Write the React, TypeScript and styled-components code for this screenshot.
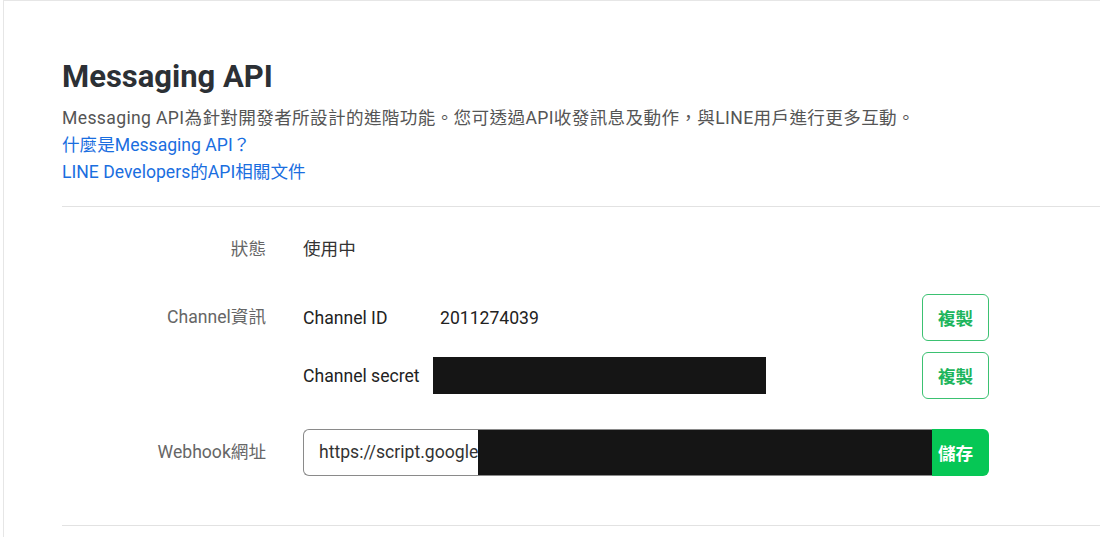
import styled, { createGlobalStyle } from "styled-components";

const GlobalStyle = createGlobalStyle`
  html, body {
    margin: 0;
    padding: 0;
    background: #fff;
    font-family: Roboto, "Noto Sans CJK TC", sans-serif;
    color: #333;
  }
`;

const Page = styled.div`
  margin-left: 3px;
  min-height: 537px;
  border-top: 1px solid #e6e6e6;
  border-left: 1px solid #e6e6e6;
  padding-left: 58px;
  box-sizing: border-box;
`;

const Header = styled.div`
  padding-top: 57px;
  padding-bottom: 20px;
  border-bottom: 1px solid #e2e2e2;
`;

const Title = styled.h1`
  margin: 0 0 10px;
  font-size: 31px;
  line-height: 37px;
  font-weight: 700;
  color: #2c3035;
`;

const Line = styled.div`
  font-size: 17.6px;
  line-height: 27px;
  letter-spacing: 0.35px;
  color: #555;
`;

const Link = styled.a`
  display: block;
  font-size: 17.6px;
  line-height: 27px;
  color: #1a6ee0;
  text-decoration: none;
`;

const List = styled.div`
  display: flex;
  flex-direction: column;
  gap: 21px;
  padding: 19px 0 49px;
  border-bottom: 1px solid #e2e2e2;
`;

const Row = styled.div<{ $extra?: number }>`
  display: grid;
  grid-template-columns: 204px 686px;
  column-gap: 37px;
  align-items: start;
  margin-top: ${(p) => p.$extra ?? 0}px;
`;

const Label = styled.div`
  text-align: right;
  font-size: 17.6px;
  line-height: 47px;
  color: #666;
`;

const Value = styled.div`
  font-size: 17.6px;
  line-height: 47px;
  color: #333;
`;

const SubList = styled.div`
  display: flex;
  flex-direction: column;
  gap: 11px;
`;

const SubRow = styled.div`
  display: flex;
  align-items: center;
  height: 47px;
`;

const SubLabel = styled.div`
  width: 130px;
  flex: none;
  font-size: 17.6px;
  color: #222;
`;

const SubValue = styled.div`
  flex: 1;
  padding-left: 7px;
  font-size: 17.6px;
  color: #222;
`;

const Redacted = styled.div<{ $w: number; $h: number }>`
  width: ${(p) => p.$w}px;
  height: ${(p) => p.$h}px;
  background: #151515;
  margin-right: auto;
`;

const CopyButton = styled.button`
  width: 67px;
  height: 47px;
  flex: none;
  box-sizing: border-box;
  border: 1px solid #3bc171;
  border-radius: 6px;
  background: #fff;
  color: #1db55c;
  font-family: inherit;
  font-size: 17.6px;
  font-weight: 700;
  cursor: pointer;
`;

const InputGroup = styled.div`
  display: flex;
  height: 47px;
`;

const InputBox = styled.div`
  flex: 1;
  display: flex;
  box-sizing: border-box;
  border: 1px solid #8a8a8a;
  border-right: none;
  border-radius: 6px 0 0 6px;
  overflow: hidden;
`;

const InputText = styled.div`
  flex: none;
  padding-left: 15px;
  white-space: nowrap;
  font-size: 17.6px;
  line-height: 45px;
  color: #333;
`;

const InputMask = styled.div`
  flex: 1;
  background: #151515;
  margin: -1px 0;
`;

const SaveButton = styled.button`
  width: 57px;
  flex: none;
  border: none;
  border-radius: 0 6px 6px 0;
  background: #06c755;
  color: #fff;
  font-family: inherit;
  font-size: 17.6px;
  font-weight: 700;
  text-align: left;
  padding: 0 0 0 6px;
  cursor: pointer;
`;

export default function App() {
  return (
    <>
      <GlobalStyle />
      <Page lang="zh-Hant">
        <Header>
          <Title>Messaging API</Title>
          <Line>
            Messaging API為針對開發者所設計的進階功能。您可透過API收發訊息及動作，與LINE用戶進行更多互動。
          </Line>
          <Link href="#">什麼是Messaging API？</Link>
          <Link href="#">LINE Developers的API相關文件</Link>
        </Header>
        <List>
          <Row>
            <Label>狀態</Label>
            <Value>使用中</Value>
          </Row>
          <Row>
            <Label>Channel資訊</Label>
            <SubList>
              <SubRow>
                <SubLabel>Channel ID</SubLabel>
                <SubValue>2011274039</SubValue>
                <CopyButton>複製</CopyButton>
              </SubRow>
              <SubRow>
                <SubLabel>Channel secret</SubLabel>
                <Redacted $w={333} $h={37} />
                <CopyButton>複製</CopyButton>
              </SubRow>
            </SubList>
          </Row>
          <Row $extra={9}>
            <Label>Webhook網址</Label>
            <InputGroup>
              <InputBox>
                <InputText>https://script.google</InputText>
                <InputMask />
              </InputBox>
              <SaveButton>儲存</SaveButton>
            </InputGroup>
          </Row>
        </List>
      </Page>
    </>
  );
}
